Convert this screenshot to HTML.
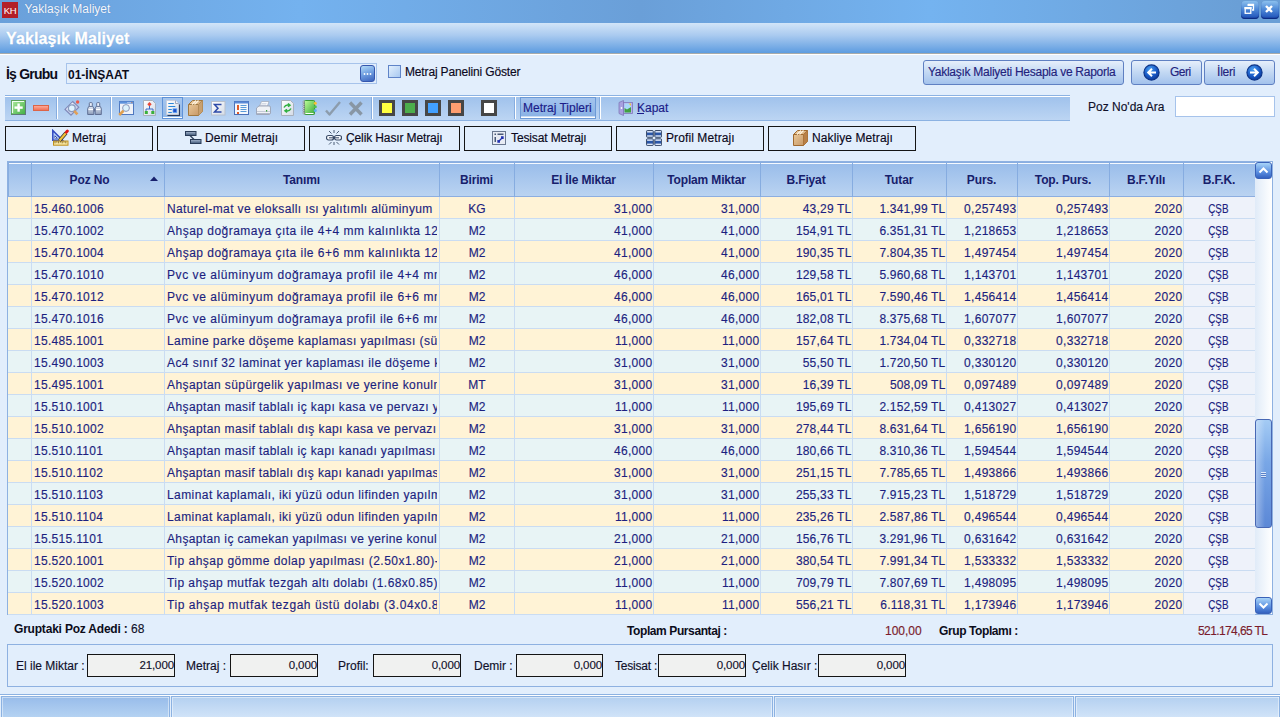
<!DOCTYPE html><html><head><meta charset="utf-8"><style>
*{margin:0;padding:0;box-sizing:border-box}
html,body{width:1280px;height:717px;overflow:hidden}
body{-webkit-text-stroke:0.15px currentColor;position:relative;background:#e2eefc;font-family:"Liberation Sans",sans-serif;font-size:12px;color:#15153a}
.a{position:absolute}
.t{position:absolute;white-space:nowrap;line-height:14px}
#title{left:0;top:0;width:1280px;height:23px;background:linear-gradient(90deg,#6aa0da 0px,#74b2ef 300px,#6a9fd8 640px,#74b3f0 930px,#6a9fd6 1240px)}
#hdr{left:0;top:23px;width:1280px;height:30px;background:linear-gradient(#d2e5f8,#abcbf0 40%,#5d9ce0 100%)}
.tb{left:5px;top:95px;width:1065px;height:26px;border-top:1px solid #8cb2e2;border-bottom:1px solid #8cb2e2;background:linear-gradient(#ffffff 0,#ffffff 1px,#a0c2ec 1px,#bcd5f3 100%)}
.sep{width:2px;height:22px;top:97px;background:linear-gradient(90deg,#86ade0 0,#86ade0 1px,#fff 1px)}
.mb{top:126px;height:25px;width:148px;border:1px solid #151515}
.mbt{color:#0a0820}
.btn{top:60px;height:25px;border:1px solid #5f80c2;border-radius:3px;background:linear-gradient(#e6effb,#c2d8f3 50%,#a3c2ec);color:#23237d}
.gh{top:162px;height:35px;background:linear-gradient(#98bcea,#bad3f1);border-bottom:1px solid #8daee0}
.ght{font-weight:bold;-webkit-text-stroke:0;color:#17206c;top:173px;text-align:center;letter-spacing:-0.15px}
.cell{height:21px;overflow:hidden;white-space:nowrap;color:#1c1f80;padding-top:5px;line-height:14px}
.r{text-align:right;padding-right:0.5px}
.c{text-align:center}
.l{padding-left:2px}
.inp{top:654px;height:23px;border:1px solid #141414;background:#f0f1f0;text-align:right;padding-right:0px;padding-top:3.5px;line-height:13px;color:#10102a;font-size:11.5px;letter-spacing:-0.1px}
.sb{top:696px;height:21px;background:linear-gradient(#b4d0f0,#d0e3f8);border:1px solid #8cb2e2;border-bottom:0;box-shadow:inset 1px 1px 0 rgba(255,255,255,0.45),inset -1px 0 0 rgba(255,255,255,0.45)}
</style></head><body>
<div id="title" class="a"></div>
<div class="a" style="left:2px;top:2px;width:16px;height:16px;background:#b31f27;color:#fff;font-size:9.5px;-webkit-text-stroke:0;line-height:17px;text-align:center;letter-spacing:-0.4px">KH</div>
<div class="t" style="left:24.5px;top:2px;color:#f4f8ff;font-size:12px;-webkit-text-stroke:0;text-shadow:0 0 1px #4a78b0">Yaklaşık Maliyet</div>
<div class="a" style="left:1241px;top:1px;width:18px;height:18px;border-radius:4px;background:linear-gradient(#8cc0ee,#4f8ad8 45%,#2a5fc0 85%,#173a9a);box-shadow:inset 0 -1px 1px #0c2a80"><svg width="18" height="18" style="position:absolute;left:-1px;top:-1px"><path d="M8 4.5h5.5v5.5h-1.5" fill="none" stroke="#fff" stroke-width="1.3"/><rect x="7.5" y="4" width="6" height="2" fill="#fff"/><rect x="5.2" y="7.7" width="5.6" height="5.6" fill="none" stroke="#fff" stroke-width="1.3"/><rect x="4.5" y="7" width="7" height="2.2" fill="#fff"/></svg></div>
<div class="a" style="left:1261px;top:1px;width:18px;height:18px;border-radius:4px;background:linear-gradient(#8cc0ee,#4f8ad8 45%,#2a5fc0 85%,#173a9a);box-shadow:inset 0 -1px 1px #0c2a80"><svg width="18" height="18" style="position:absolute;left:-1px;top:-1px"><path d="M6 6l6 6M12 6l-6 6" stroke="#fff" stroke-width="2.4"/></svg></div>
<div id="hdr" class="a"></div>
<div class="a" style="left:0;top:53px;width:1280px;height:1px;background:#a7aaa9"></div>
<div class="a" style="left:0;top:54px;width:1280px;height:1px;background:#ffffff"></div>
<div class="t" style="left:6px;top:30px;color:#fff;font-weight:bold;-webkit-text-stroke:0.3px #fff;letter-spacing:0.1px;font-size:16px;line-height:18px;text-shadow:0 0 1px #6a9ad0">Yaklaşık Maliyet</div>
<div class="t" style="left:6px;top:66px;font-weight:bold;-webkit-text-stroke:0;font-size:14px;line-height:16px;letter-spacing:-0.8px;color:#0c0c1a">İş Grubu</div>
<div class="a" style="left:66px;top:63px;width:311px;height:21px;border:1px solid #a6c3eb"></div>
<div class="t" style="left:68px;top:68px;font-weight:bold;-webkit-text-stroke:0;font-size:12px;color:#0c0c1a">01-İNŞAAT</div>
<div class="a" style="left:360px;top:65px;width:15px;height:17px;border-radius:3px;border:1px solid #3556ad;background:linear-gradient(160deg,#b4dcf8,#6f9ee0 50%,#3a62bd)"><svg width="13" height="15" style="position:absolute;left:0;top:0"><circle cx="3.5" cy="8" r="0.9" fill="#fff"/><circle cx="6.5" cy="8" r="0.9" fill="#fff"/><circle cx="9.5" cy="8" r="0.9" fill="#fff"/></svg></div>
<div class="a" style="left:388px;top:65px;width:13px;height:13px;border:1px solid #5f84c8;background:linear-gradient(135deg,#e2f0fd,#a9c9f0)"></div>
<div class="t" style="left:405px;top:65px;color:#0c0820;letter-spacing:-0.15px">Metraj Panelini Göster</div>
<div class="a btn" style="left:923px;width:201px"></div>
<div class="t" style="left:928px;top:65px;color:#23237d;letter-spacing:-0.27px">Yaklaşık Maliyeti Hesapla ve Raporla</div>
<div class="a btn" style="left:1131px;width:71px"></div>
<div class="a btn" style="left:1204px;width:71px"></div>
<div class="a" style="left:1142.5px;top:63.5px;width:17px;height:17px"><svg width="17" height="17" viewBox="0 0 17 17"><defs><radialGradient id="ag" cx="40%" cy="30%" r="70%"><stop offset="0" stop-color="#4aa0f0"/><stop offset="0.6" stop-color="#1a5cc8"/><stop offset="1" stop-color="#0d3a9a"/></radialGradient></defs><circle cx="8.5" cy="8.5" r="7.6" fill="url(#ag)" stroke="#0a3286" stroke-width="1.1"/><path d="M13 8.5H5.5M9 4.8L5.2 8.5 9 12.2" fill="none" stroke="#fff" stroke-width="2"/></svg></div>
<div class="t" style="left:1170px;top:65px;color:#23237d;letter-spacing:-0.5px">Geri</div>
<div class="t" style="left:1217px;top:65px;color:#23237d;letter-spacing:-0.2px">İleri</div>
<div class="a" style="left:1245.5px;top:63.5px;width:17px;height:17px"><svg width="17" height="17" viewBox="0 0 17 17"><circle cx="8.5" cy="8.5" r="7.6" fill="url(#ag)" stroke="#0a3286" stroke-width="1.1"/><path d="M4 8.5H11.5M8 4.8L11.8 8.5 8 12.2" fill="none" stroke="#fff" stroke-width="2"/></svg></div>
<div class="a tb"></div>
<div class="a sep" style="left:56px"></div>
<div class="a sep" style="left:110px"></div>
<div class="a sep" style="left:371px"></div>
<div class="a sep" style="left:514px"></div>
<div class="a sep" style="left:599px"></div>
<svg width="0" height="0" style="position:absolute"><defs>
<linearGradient id="gGreen" x1="0" y1="0" x2="1" y2="1"><stop offset="0" stop-color="#b0eaa0"/><stop offset="1" stop-color="#3fae42"/></linearGradient>
<linearGradient id="gRed" x1="0" y1="0" x2="0" y2="1"><stop offset="0" stop-color="#ffb0a0"/><stop offset="1" stop-color="#f06a50"/></linearGradient>
<linearGradient id="gDoc" x1="0" y1="0" x2="1" y2="1"><stop offset="0" stop-color="#ffffff"/><stop offset="1" stop-color="#d4dbe6"/></linearGradient>
<linearGradient id="gBox" x1="0" y1="0" x2="1" y2="1"><stop offset="0" stop-color="#f0d0a0"/><stop offset="1" stop-color="#c09060"/></linearGradient>
<linearGradient id="gBook" x1="0" y1="0" x2="1" y2="1"><stop offset="0" stop-color="#c0ff9a"/><stop offset="1" stop-color="#3aa83a"/></linearGradient>
<linearGradient id="gSteel" x1="0" y1="0" x2="0" y2="1"><stop offset="0" stop-color="#e8eef8"/><stop offset="1" stop-color="#8a9ab8"/></linearGradient>
<linearGradient id="gBar" x1="0" y1="0" x2="0" y2="1"><stop offset="0" stop-color="#a8b8d0"/><stop offset="1" stop-color="#405878"/></linearGradient>
</defs></svg>
<svg class="a" style="left:11px;top:100px" width="15" height="15" viewBox="0 0 15 15"><rect x="0.5" y="0.5" width="14" height="14" fill="url(#gGreen)" stroke="#58a058" stroke-width="1"/><path d="M1.5 13V1.5H13" fill="none" stroke="#f0fff0" stroke-width="1.2"/><path d="M14.5 1v13.5H1" fill="none" stroke="#607080" stroke-width="0.8"/><rect x="6.4" y="3.5" width="2.4" height="8.2" fill="#fff"/><rect x="3.5" y="6.4" width="8.2" height="2.4" fill="#fff"/></svg>
<svg class="a" style="left:33px;top:105px" width="16" height="6" viewBox="0 0 16 6"><rect x="0.5" y="0.5" width="15" height="5" fill="url(#gRed)" stroke="#dc6448"/></svg>
<svg class="a" style="left:64px;top:100px" width="16" height="16" viewBox="0 0 16 16"><path d="M1 9.5L8.8 1.5 14.8 7.2 7 15.2z" fill="#c9d0ec" stroke="#7f88b8" stroke-width="1.1"/><path d="M2.6 9.4L8.8 3" stroke="#eef0fc" stroke-width="1.2"/><circle cx="13.6" cy="2" r="1.7" fill="#f05848"/><circle cx="7.8" cy="8.2" r="3.4" fill="#dff2ff" stroke="#8a9cc0" stroke-width="1.3"/><path d="M10.2 10.8l3.2 3.6" stroke="#e0a058" stroke-width="2.6"/></svg>
<svg class="a" style="left:87px;top:102px" width="15" height="13" viewBox="0 0 15 13"><path d="M0.7 12.5V6.5L1.8 4.3H5.8L6.8 6.5V12.5z" fill="url(#gSteel)" stroke="#5f6f94" stroke-width="1"/><path d="M8.2 12.5V6.5L9.2 4.3H13.2L14.3 6.5V12.5z" fill="url(#gSteel)" stroke="#5f6f94" stroke-width="1"/><rect x="2.3" y="0.6" width="3" height="3.8" rx="0.8" fill="#e8eef8" stroke="#5f6f94" stroke-width="1"/><rect x="9.7" y="0.6" width="3" height="3.8" rx="0.8" fill="#e8eef8" stroke="#5f6f94" stroke-width="1"/><rect x="6.8" y="6.5" width="1.4" height="3" fill="#5f6f94"/><path d="M1.5 7.5h4.5M9 7.5h4.5" stroke="#ffffff" stroke-width="1.2"/></svg>
<svg class="a" style="left:118px;top:100px" width="16" height="16" viewBox="0 0 16 16"><rect x="1.5" y="1.5" width="14" height="13" fill="#f0f2f8" stroke="#4f78c0" stroke-width="1"/><rect x="1.5" y="1.5" width="14" height="2.2" fill="#5c92dc"/><rect x="9.5" y="2.2" width="1" height="0.9" fill="#fff"/><rect x="11.5" y="2.2" width="1" height="0.9" fill="#fff"/><rect x="13.3" y="2.2" width="1" height="0.9" fill="#f08040"/><circle cx="8" cy="8" r="3.4" fill="#dcf2fc" stroke="#8c98b8" stroke-width="1"/><path d="M5.5 10.8L1.2 15" stroke="#e0a050" stroke-width="2.6"/></svg>
<svg class="a" style="left:143px;top:100px" width="13" height="16" viewBox="0 0 13 16"><path d="M0.5 0.5H9.5L12.5 3.5V15.5H0.5z" fill="url(#gDoc)" stroke="#a8b0bc"/><path d="M6.5 2l2.2 2.2-2.2 2.2-2.2-2.2z" fill="#e84a3a"/><path d="M6.5 6v3M3 12V9h7v3" fill="none" stroke="#3a6ac8" stroke-width="1"/><rect x="1.8" y="11" width="3" height="3" fill="#3ab03a"/><rect x="8.3" y="11" width="3" height="3" fill="#3ab03a"/></svg>
<div class="a" style="left:162px;top:97px;width:21px;height:22px;border:1px solid #5f92d8;background:linear-gradient(#a6c6ee,#8fb6e6);box-shadow:inset 0 -1px 0 #fff"></div>
<svg class="a" style="left:166px;top:100px" width="14" height="16" viewBox="0 0 14 16"><path d="M13.5 4.5V15.5H1.5" fill="none" stroke="#2a3a5c" stroke-width="1.6"/><path d="M0.5 15V0.5H9.5L12.5 3.5V14.5H0.5z" fill="url(#gDoc)" stroke="#c8ccd8" stroke-width="0.8"/><path d="M9.5 0.5V3.5H12.5" fill="#f0f2f8" stroke="#8a96b0" stroke-width="0.8"/><path d="M2.3 3.5h5.5M2.3 6.5h7M2.3 9.5h3.5M2.3 12.5h3.5" stroke="#2a86d8" stroke-width="1.2"/><rect x="7" y="8.8" width="3.8" height="3.8" fill="#2050c8" stroke="#60a8ff" stroke-width="0.7"/></svg>
<svg class="a" style="left:188px;top:100px" width="15" height="16" viewBox="0 0 15 16"><path d="M0.5 4.5L4.5 0.5H14.5V11.5L10.5 15.5H0.5z" fill="url(#gBox)" stroke="#a07840"/><path d="M0.5 4.5H10.5V15.5M10.5 4.5L14.5 0.5" fill="none" stroke="#a07840"/><path d="M4 4.5L8 0.5M6.5 4.5L10.5 0.5" stroke="#fff4e0" stroke-width="1.2"/><path d="M10.5 4.5L14.5 0.5V11.5L10.5 15.5z" fill="#c8a070"/></svg>
<svg class="a" style="left:211px;top:101px" width="15" height="15" viewBox="0 0 15 15"><rect x="0.5" y="0.5" width="13.5" height="13.5" fill="url(#gDoc)" stroke="#b8c0cc"/><path d="M10.5 3.5H3.5L7 7.2 3.5 11H10.5" fill="none" stroke="#2d4aa8" stroke-width="1.5"/></svg>
<svg class="a" style="left:234px;top:101px" width="15" height="14" viewBox="0 0 15 14"><rect x="0.5" y="0.5" width="14" height="13" fill="#f6f8fc" stroke="#4a70b8"/><rect x="0.5" y="0.5" width="14" height="2" fill="#5a8ad8"/><path d="M4 4v5M4 11v2" stroke="#e05a28" stroke-width="2"/><path d="M6.5 4.5h6M6.5 6.5h6M6.5 8.5h6M6.5 10.5h6" stroke="#5a9ad8" stroke-width="1"/></svg>
<svg class="a" style="left:256px;top:101px" width="15" height="14" viewBox="0 0 15 14"><path d="M3.5 5L5.5 0.5H13L11.5 5z" fill="#f8f9fc" stroke="#a4acbc" stroke-width="0.8"/><path d="M5.5 2.5h5M5 4h5" stroke="#c0c8d8" stroke-width="0.6"/><path d="M0.5 7L3 5H14L14.5 7V12.5L13.5 13.5H0.5z" fill="#f0f2f6" stroke="#98a2b4" stroke-width="0.9"/><path d="M1 10.5H14" stroke="#c4cad6" stroke-width="1"/><path d="M1 12.5H14" stroke="#b0b8c8" stroke-width="1"/><rect x="10" y="9" width="1.2" height="1.6" fill="#40a040"/></svg>
<svg class="a" style="left:281px;top:100px" width="13" height="16" viewBox="0 0 13 16"><path d="M0.5 0.5H9.5L12.5 3.5V15.5H0.5z" fill="url(#gDoc)" stroke="#a8b0bc"/><path d="M3 7.5Q4.5 4.5 8 5.2M7 3.5l2 1.7-2 1.5M10 8.5Q8.5 11.5 5 10.8M6 12.5l-2-1.7 2-1.5" fill="none" stroke="#30b040" stroke-width="1.5"/></svg>
<svg class="a" style="left:302px;top:100px" width="15" height="15" viewBox="0 0 15 15"><rect x="2.5" y="0.5" width="10" height="14" rx="0.8" fill="url(#gBook)" stroke="#3a9a3a"/><path d="M3.5 13.5H11.5" stroke="#fff" stroke-width="1"/><g fill="#f4f4f4" stroke="#707078" stroke-width="0.6"><circle cx="1.8" cy="2" r="0.9"/><circle cx="1.8" cy="4.2" r="0.9"/><circle cx="1.8" cy="6.4" r="0.9"/><circle cx="1.8" cy="8.6" r="0.9"/><circle cx="1.8" cy="10.8" r="0.9"/><circle cx="1.8" cy="13" r="0.9"/></g><circle cx="13.3" cy="3.2" r="1.5" fill="#f8c030"/><circle cx="13.3" cy="6.8" r="1.5" fill="#50c050"/><circle cx="13.3" cy="10.4" r="1.5" fill="#60b0f0"/></svg>
<svg class="a" style="left:325px;top:101px" width="16" height="15" viewBox="0 0 16 15"><path d="M1 9.5L4.5 13.5 15 1" fill="none" stroke="#8c9cac" stroke-width="2.4" stroke-linejoin="round"/></svg>
<svg class="a" style="left:348px;top:101px" width="15" height="15" viewBox="0 0 15 15"><path d="M2 1.5L13.5 13.5M13.5 1.5L2 13.5" stroke="#8896a4" stroke-width="3.4"/></svg>
<div class="a" style="left:379px;top:100px;width:16px;height:16px;border:3px solid #464646;background:#ffff40"></div>
<div class="a" style="left:402px;top:100px;width:16px;height:16px;border:3px solid #464646;background:#4cae4c"></div>
<div class="a" style="left:425px;top:100px;width:16px;height:16px;border:3px solid #464646;background:#42a0ff"></div>
<div class="a" style="left:448px;top:100px;width:16px;height:16px;border:3px solid #464646;background:#ff9e70"></div>
<div class="a" style="left:481px;top:100px;width:16px;height:16px;border:3px solid #464646;background:#ffffff"></div>
<div class="a" style="left:520px;top:97px;width:76px;height:22px;border:1px solid #6d9ad6;background:linear-gradient(#a4c4ee,#88b0e4);box-shadow:inset 0 -1px 0 #fff,inset 0 -2px 0 #c8dcf4"></div>
<div class="t" style="left:523px;top:101px;color:#1c1c88">Metraj Tipleri</div>
<svg class="a" style="left:618px;top:100px" width="15" height="16" viewBox="0 0 15 16"><path d="M1 2.5L5.5 0.5V15.5L1 13.5z" fill="#a8a0e0" stroke="#8078b8" stroke-width="0.8"/><rect x="5.5" y="2.5" width="9" height="11" fill="#b8b0f0" stroke="#8078b8" stroke-width="0.8"/><rect x="6.5" y="3.5" width="6.5" height="9" fill="#a8d8f8"/><path d="M6.5 12.5V8L9 9.5 13 7V12.5z" fill="#40a040"/><path d="M10.5 3.5H13V6z" fill="#f0c040"/><path d="M2.5 8h2M3.5 7v2" stroke="#fff" stroke-width="0.8"/></svg>
<div class="t" style="left:637px;top:101px;color:#1c1c88">Kapat</div>
<div class="a" style="left:637px;top:113px;width:7px;height:1px;background:#1c1c88"></div>
<div class="t" style="left:1088px;top:100px;color:#10102a">Poz No'da Ara</div>
<div class="a" style="left:1175px;top:96px;width:100px;height:21px;border:1px solid #a6c3eb;background:#fff"></div>
<div class="a mb" style="left:5px;width:148px"></div>
<div class="t mbt" style="left:72px;top:131px;letter-spacing:0.1px">Metraj</div>
<div class="a mb" style="left:157px;width:148px"></div>
<div class="t mbt" style="left:205px;top:131px;letter-spacing:0.1px">Demir Metrajı</div>
<div class="a mb" style="left:309px;width:151px"></div>
<div class="t mbt" style="left:346px;top:131px;letter-spacing:-0.12px">Çelik Hasır Metrajı</div>
<div class="a mb" style="left:464px;width:148px"></div>
<div class="t mbt" style="left:511px;top:131px;letter-spacing:-0.12px">Tesisat Metrajı</div>
<div class="a mb" style="left:616px;width:148px"></div>
<div class="t mbt" style="left:666px;top:131px;letter-spacing:0.1px">Profil Metrajı</div>
<div class="a mb" style="left:768px;width:148px"></div>
<div class="t mbt" style="left:812px;top:131px;letter-spacing:0.1px">Nakliye Metrajı</div>
<svg class="a" style="left:52px;top:129px" width="17" height="17" viewBox="0 0 17 17"><path d="M0.8 1.5V11.2H10.5z" fill="#b4d0fa" stroke="#3048c0" stroke-width="1.5" stroke-linejoin="miter"/><path d="M2.6 6.2V9.6H6z" fill="#1c2a88"/><circle cx="3.6" cy="8.6" r="0.6" fill="#fff"/><rect x="1.5" y="12" width="14.5" height="4.2" fill="#f6e4a0" stroke="#c0901c" stroke-width="1"/><path d="M3 12.3v2M4.8 12.3v1.3M6.6 12.3v2M8.4 12.3v1.3M10.2 12.3v2M12 12.3v1.3M13.8 12.3v2" stroke="#7a5a10" stroke-width="0.8"/><path d="M7.5 11.5L14 4" stroke="#303030" stroke-width="3.6"/><path d="M7.5 11.5L14 4" stroke="#f2c23a" stroke-width="2.2"/><path d="M14.3 3.2L15.4 2" stroke="#e01818" stroke-width="2.8" stroke-linecap="round"/></svg>
<svg class="a" style="left:185px;top:131px" width="17" height="14" viewBox="0 0 17 14"><rect x="0.5" y="0.5" width="10.5" height="4" fill="url(#gBar)" stroke="#2a3c58"/><rect x="5.5" y="8.5" width="10.5" height="4" fill="url(#gBar)" stroke="#2a3c58"/><path d="M5 4.5L9 8.5" stroke="#2a3c58" stroke-width="1.2"/></svg>
<svg class="a" style="left:326px;top:130px" width="16" height="15" viewBox="0 0 16 15"><rect x="0.5" y="5.5" width="7" height="4.5" rx="2" fill="#f4f6fa" stroke="#3a4c68" stroke-width="1.2"/><rect x="8.5" y="5.5" width="7" height="4.5" rx="2" fill="#f4f6fa" stroke="#3a4c68" stroke-width="1.2"/><path d="M3 7.8h10" stroke="#3a4c68" stroke-width="1"/><path d="M3 1l2.5 2.5M13 1l-2.5 2.5M8 0v3M3 14.5l2.5-2.5M13 14.5l-2.5-2.5M8 15v-3" stroke="#3a4c68" stroke-width="0.9"/></svg>
<svg class="a" style="left:492px;top:131px" width="14" height="14" viewBox="0 0 14 14"><rect x="0.5" y="0.5" width="13" height="13" fill="#e8ecf4" stroke="#6a7890"/><rect x="2.5" y="2.5" width="1.5" height="1.5" fill="#4a5a78"/><rect x="5.5" y="2.5" width="6" height="1.5" fill="#4a5a78"/><rect x="2.5" y="6" width="1.5" height="5" fill="#4a5a78"/><path d="M6 11l5-5M9 6h2v2M6 9v2h2" fill="none" stroke="#2030b0" stroke-width="1.3"/></svg>
<svg class="a" style="left:646px;top:130px" width="16" height="16" viewBox="0 0 16 16"><rect x="0.5" y="0.5" width="6.8" height="6.8" rx="1" fill="#2a56a8" stroke="#40506c" stroke-width="1"/><rect x="1.1" y="1.1" width="5.6" height="1.4" fill="#e8eef8"/><rect x="1.1" y="5.3" width="5.6" height="1.4" fill="#dfe6f2"/><rect x="8.8" y="0.5" width="6.8" height="6.8" rx="1" fill="#2a56a8" stroke="#40506c" stroke-width="1"/><rect x="9.4" y="1.1" width="5.6" height="1.4" fill="#e8eef8"/><rect x="9.4" y="5.3" width="5.6" height="1.4" fill="#dfe6f2"/><rect x="0.5" y="8.8" width="6.8" height="6.8" rx="1" fill="#2a56a8" stroke="#40506c" stroke-width="1"/><rect x="1.1" y="9.4" width="5.6" height="1.4" fill="#e8eef8"/><rect x="1.1" y="13.600000000000001" width="5.6" height="1.4" fill="#dfe6f2"/><rect x="8.8" y="8.8" width="6.8" height="6.8" rx="1" fill="#2a56a8" stroke="#40506c" stroke-width="1"/><rect x="9.4" y="9.4" width="5.6" height="1.4" fill="#e8eef8"/><rect x="9.4" y="13.600000000000001" width="5.6" height="1.4" fill="#dfe6f2"/></svg>
<svg class="a" style="left:793px;top:130px" width="15" height="16" viewBox="0 0 15 16"><path d="M0.5 4.5L4.5 0.5H14.5V11.5L10.5 15.5H0.5z" fill="url(#gBox)" stroke="#a06a30"/><path d="M0.5 4.5H10.5V15.5M10.5 4.5L14.5 0.5" fill="none" stroke="#a06a30"/><path d="M4 4.5L8 0.5M6.5 4.5L10.5 0.5" stroke="#fff4e0" stroke-width="1.2"/><path d="M10.5 4.5L14.5 0.5V11.5L10.5 15.5z" fill="#b88048"/></svg>
<div class="a" style="left:7px;top:161px;width:1266px;height:454px;border:1px solid #8eb1e1;background:#e3effb"></div>
<div class="a gh" style="left:8px;width:1247px"></div>
<div class="a" style="left:8px;top:162px;width:1247px;height:1px;background:#88ade0"></div>
<div class="a" style="left:8px;top:162px;width:1px;height:34px;background:#88ade0"></div>
<div class="a" style="left:9px;top:163px;width:1246px;height:1px;background:#f4f9ff"></div>
<div class="a" style="left:31px;top:163px;width:1px;height:34px;background:#86ace0"></div>
<div class="a" style="left:164px;top:163px;width:1px;height:34px;background:#86ace0"></div>
<div class="a" style="left:439px;top:163px;width:1px;height:34px;background:#86ace0"></div>
<div class="a" style="left:514px;top:163px;width:1px;height:34px;background:#86ace0"></div>
<div class="a" style="left:653px;top:163px;width:1px;height:34px;background:#86ace0"></div>
<div class="a" style="left:760px;top:163px;width:1px;height:34px;background:#86ace0"></div>
<div class="a" style="left:852px;top:163px;width:1px;height:34px;background:#86ace0"></div>
<div class="a" style="left:946px;top:163px;width:1px;height:34px;background:#86ace0"></div>
<div class="a" style="left:1017px;top:163px;width:1px;height:34px;background:#86ace0"></div>
<div class="a" style="left:1109px;top:163px;width:1px;height:34px;background:#86ace0"></div>
<div class="a" style="left:1183px;top:163px;width:1px;height:34px;background:#86ace0"></div>
<div class="t ght" style="left:31px;width:117px">Poz No</div>
<div class="t ght" style="left:164px;width:275px">Tanımı</div>
<div class="t ght" style="left:439px;width:75px">Birimi</div>
<div class="t ght" style="left:514px;width:139px">El İle Miktar</div>
<div class="t ght" style="left:653px;width:107px">Toplam Miktar</div>
<div class="t ght" style="left:760px;width:92px">B.Fiyat</div>
<div class="t ght" style="left:852px;width:94px">Tutar</div>
<div class="t ght" style="left:946px;width:71px">Purs.</div>
<div class="t ght" style="left:1017px;width:92px">Top. Purs.</div>
<div class="t ght" style="left:1109px;width:74px">B.F.Yılı</div>
<div class="t ght" style="left:1183px;width:72px">B.F.K.</div>
<svg class="a" style="left:150px;top:176px" width="8" height="5" viewBox="0 0 8 5"><path d="M0 5L4 0.5 8 5z" fill="#17206c"/></svg>
<div class="a" style="left:8px;top:197px;width:1175px;height:22px;background:#fff3d6"></div>
<div class="a" style="left:1183px;top:197px;width:72px;height:22px;background:#eef2fa"></div>
<div class="a" style="left:8px;top:218px;width:1247px;height:1px;background:#cadcf2"></div>
<div class="a cell l" style="left:32px;top:197px;width:132px;letter-spacing:0.3px;">15.460.1006</div>
<div class="a cell l" style="left:165px;top:197px;width:272px;letter-spacing:0.381px;">Naturel-mat ve eloksallı ısı yalıtımlı alüminyum</div>
<div class="a cell c" style="left:440px;top:197px;width:74px;">KG</div>
<div class="a cell r" style="left:515px;top:197px;width:138px;letter-spacing:0.3px;">31,000</div>
<div class="a cell r" style="left:654px;top:197px;width:106px;letter-spacing:0.3px;">31,000</div>
<div class="a cell r" style="left:761px;top:197px;width:91px;letter-spacing:0.2px;">43,29 TL</div>
<div class="a cell r" style="left:853px;top:197px;width:93px;letter-spacing:0.2px;">1.341,99 TL</div>
<div class="a cell r" style="left:947px;top:197px;width:70px;letter-spacing:0.3px;">0,257493</div>
<div class="a cell r" style="left:1018px;top:197px;width:91px;letter-spacing:0.3px;">0,257493</div>
<div class="a cell r" style="left:1110px;top:197px;width:73px;letter-spacing:0.3px;">2020</div>
<div class="a cell c" style="left:1184px;top:197px;width:71px;"><span style="display:inline-block;transform:scaleX(0.82);margin-left:-2px">ÇŞB</span></div>
<div class="a" style="left:8px;top:219px;width:1175px;height:22px;background:#e8f4f5"></div>
<div class="a" style="left:1183px;top:219px;width:72px;height:22px;background:#eef2fa"></div>
<div class="a" style="left:8px;top:240px;width:1247px;height:1px;background:#cadcf2"></div>
<div class="a cell l" style="left:32px;top:219px;width:132px;letter-spacing:0.3px;">15.470.1002</div>
<div class="a cell l" style="left:165px;top:219px;width:272px;letter-spacing:0.483px;">Ahşap doğramaya çıta ile 4+4 mm kalınlıkta 12 mm</div>
<div class="a cell c" style="left:440px;top:219px;width:74px;">M2</div>
<div class="a cell r" style="left:515px;top:219px;width:138px;letter-spacing:0.3px;">41,000</div>
<div class="a cell r" style="left:654px;top:219px;width:106px;letter-spacing:0.3px;">41,000</div>
<div class="a cell r" style="left:761px;top:219px;width:91px;letter-spacing:0.2px;">154,91 TL</div>
<div class="a cell r" style="left:853px;top:219px;width:93px;letter-spacing:0.2px;">6.351,31 TL</div>
<div class="a cell r" style="left:947px;top:219px;width:70px;letter-spacing:0.3px;">1,218653</div>
<div class="a cell r" style="left:1018px;top:219px;width:91px;letter-spacing:0.3px;">1,218653</div>
<div class="a cell r" style="left:1110px;top:219px;width:73px;letter-spacing:0.3px;">2020</div>
<div class="a cell c" style="left:1184px;top:219px;width:71px;"><span style="display:inline-block;transform:scaleX(0.82);margin-left:-2px">ÇŞB</span></div>
<div class="a" style="left:8px;top:241px;width:1175px;height:22px;background:#fff3d6"></div>
<div class="a" style="left:1183px;top:241px;width:72px;height:22px;background:#eef2fa"></div>
<div class="a" style="left:8px;top:262px;width:1247px;height:1px;background:#cadcf2"></div>
<div class="a cell l" style="left:32px;top:241px;width:132px;letter-spacing:0.3px;">15.470.1004</div>
<div class="a cell l" style="left:165px;top:241px;width:272px;letter-spacing:0.483px;">Ahşap doğramaya çıta ile 6+6 mm kalınlıkta 12 mm</div>
<div class="a cell c" style="left:440px;top:241px;width:74px;">M2</div>
<div class="a cell r" style="left:515px;top:241px;width:138px;letter-spacing:0.3px;">41,000</div>
<div class="a cell r" style="left:654px;top:241px;width:106px;letter-spacing:0.3px;">41,000</div>
<div class="a cell r" style="left:761px;top:241px;width:91px;letter-spacing:0.2px;">190,35 TL</div>
<div class="a cell r" style="left:853px;top:241px;width:93px;letter-spacing:0.2px;">7.804,35 TL</div>
<div class="a cell r" style="left:947px;top:241px;width:70px;letter-spacing:0.3px;">1,497454</div>
<div class="a cell r" style="left:1018px;top:241px;width:91px;letter-spacing:0.3px;">1,497454</div>
<div class="a cell r" style="left:1110px;top:241px;width:73px;letter-spacing:0.3px;">2020</div>
<div class="a cell c" style="left:1184px;top:241px;width:71px;"><span style="display:inline-block;transform:scaleX(0.82);margin-left:-2px">ÇŞB</span></div>
<div class="a" style="left:8px;top:263px;width:1175px;height:22px;background:#e8f4f5"></div>
<div class="a" style="left:1183px;top:263px;width:72px;height:22px;background:#eef2fa"></div>
<div class="a" style="left:8px;top:284px;width:1247px;height:1px;background:#cadcf2"></div>
<div class="a cell l" style="left:32px;top:263px;width:132px;letter-spacing:0.3px;">15.470.1010</div>
<div class="a cell l" style="left:165px;top:263px;width:272px;letter-spacing:0.571px;">Pvc ve alüminyum doğramaya profil ile 4+4 mm</div>
<div class="a cell c" style="left:440px;top:263px;width:74px;">M2</div>
<div class="a cell r" style="left:515px;top:263px;width:138px;letter-spacing:0.3px;">46,000</div>
<div class="a cell r" style="left:654px;top:263px;width:106px;letter-spacing:0.3px;">46,000</div>
<div class="a cell r" style="left:761px;top:263px;width:91px;letter-spacing:0.2px;">129,58 TL</div>
<div class="a cell r" style="left:853px;top:263px;width:93px;letter-spacing:0.2px;">5.960,68 TL</div>
<div class="a cell r" style="left:947px;top:263px;width:70px;letter-spacing:0.3px;">1,143701</div>
<div class="a cell r" style="left:1018px;top:263px;width:91px;letter-spacing:0.3px;">1,143701</div>
<div class="a cell r" style="left:1110px;top:263px;width:73px;letter-spacing:0.3px;">2020</div>
<div class="a cell c" style="left:1184px;top:263px;width:71px;"><span style="display:inline-block;transform:scaleX(0.82);margin-left:-2px">ÇŞB</span></div>
<div class="a" style="left:8px;top:285px;width:1175px;height:22px;background:#fff3d6"></div>
<div class="a" style="left:1183px;top:285px;width:72px;height:22px;background:#eef2fa"></div>
<div class="a" style="left:8px;top:306px;width:1247px;height:1px;background:#cadcf2"></div>
<div class="a cell l" style="left:32px;top:285px;width:132px;letter-spacing:0.3px;">15.470.1012</div>
<div class="a cell l" style="left:165px;top:285px;width:272px;letter-spacing:0.573px;">Pvc ve alüminyum doğramaya profil ile 6+6 mm</div>
<div class="a cell c" style="left:440px;top:285px;width:74px;">M2</div>
<div class="a cell r" style="left:515px;top:285px;width:138px;letter-spacing:0.3px;">46,000</div>
<div class="a cell r" style="left:654px;top:285px;width:106px;letter-spacing:0.3px;">46,000</div>
<div class="a cell r" style="left:761px;top:285px;width:91px;letter-spacing:0.2px;">165,01 TL</div>
<div class="a cell r" style="left:853px;top:285px;width:93px;letter-spacing:0.2px;">7.590,46 TL</div>
<div class="a cell r" style="left:947px;top:285px;width:70px;letter-spacing:0.3px;">1,456414</div>
<div class="a cell r" style="left:1018px;top:285px;width:91px;letter-spacing:0.3px;">1,456414</div>
<div class="a cell r" style="left:1110px;top:285px;width:73px;letter-spacing:0.3px;">2020</div>
<div class="a cell c" style="left:1184px;top:285px;width:71px;"><span style="display:inline-block;transform:scaleX(0.82);margin-left:-2px">ÇŞB</span></div>
<div class="a" style="left:8px;top:307px;width:1175px;height:22px;background:#e8f4f5"></div>
<div class="a" style="left:1183px;top:307px;width:72px;height:22px;background:#eef2fa"></div>
<div class="a" style="left:8px;top:328px;width:1247px;height:1px;background:#cadcf2"></div>
<div class="a cell l" style="left:32px;top:307px;width:132px;letter-spacing:0.3px;">15.470.1016</div>
<div class="a cell l" style="left:165px;top:307px;width:272px;letter-spacing:0.573px;">Pvc ve alüminyum doğramaya profil ile 6+6 mm</div>
<div class="a cell c" style="left:440px;top:307px;width:74px;">M2</div>
<div class="a cell r" style="left:515px;top:307px;width:138px;letter-spacing:0.3px;">46,000</div>
<div class="a cell r" style="left:654px;top:307px;width:106px;letter-spacing:0.3px;">46,000</div>
<div class="a cell r" style="left:761px;top:307px;width:91px;letter-spacing:0.2px;">182,08 TL</div>
<div class="a cell r" style="left:853px;top:307px;width:93px;letter-spacing:0.2px;">8.375,68 TL</div>
<div class="a cell r" style="left:947px;top:307px;width:70px;letter-spacing:0.3px;">1,607077</div>
<div class="a cell r" style="left:1018px;top:307px;width:91px;letter-spacing:0.3px;">1,607077</div>
<div class="a cell r" style="left:1110px;top:307px;width:73px;letter-spacing:0.3px;">2020</div>
<div class="a cell c" style="left:1184px;top:307px;width:71px;"><span style="display:inline-block;transform:scaleX(0.82);margin-left:-2px">ÇŞB</span></div>
<div class="a" style="left:8px;top:329px;width:1175px;height:22px;background:#fff3d6"></div>
<div class="a" style="left:1183px;top:329px;width:72px;height:22px;background:#eef2fa"></div>
<div class="a" style="left:8px;top:350px;width:1247px;height:1px;background:#cadcf2"></div>
<div class="a cell l" style="left:32px;top:329px;width:132px;letter-spacing:0.3px;">15.485.1001</div>
<div class="a cell l" style="left:165px;top:329px;width:272px;letter-spacing:0.445px;">Lamine parke döşeme kaplaması yapılması (süngerli)</div>
<div class="a cell c" style="left:440px;top:329px;width:74px;">M2</div>
<div class="a cell r" style="left:515px;top:329px;width:138px;letter-spacing:0.3px;">11,000</div>
<div class="a cell r" style="left:654px;top:329px;width:106px;letter-spacing:0.3px;">11,000</div>
<div class="a cell r" style="left:761px;top:329px;width:91px;letter-spacing:0.2px;">157,64 TL</div>
<div class="a cell r" style="left:853px;top:329px;width:93px;letter-spacing:0.2px;">1.734,04 TL</div>
<div class="a cell r" style="left:947px;top:329px;width:70px;letter-spacing:0.3px;">0,332718</div>
<div class="a cell r" style="left:1018px;top:329px;width:91px;letter-spacing:0.3px;">0,332718</div>
<div class="a cell r" style="left:1110px;top:329px;width:73px;letter-spacing:0.3px;">2020</div>
<div class="a cell c" style="left:1184px;top:329px;width:71px;"><span style="display:inline-block;transform:scaleX(0.82);margin-left:-2px">ÇŞB</span></div>
<div class="a" style="left:8px;top:351px;width:1175px;height:22px;background:#e8f4f5"></div>
<div class="a" style="left:1183px;top:351px;width:72px;height:22px;background:#eef2fa"></div>
<div class="a" style="left:8px;top:372px;width:1247px;height:1px;background:#cadcf2"></div>
<div class="a cell l" style="left:32px;top:351px;width:132px;letter-spacing:0.3px;">15.490.1003</div>
<div class="a cell l" style="left:165px;top:351px;width:272px;letter-spacing:0.414px;">Ac4 sınıf 32 laminat yer kaplaması ile döşeme kaplaması</div>
<div class="a cell c" style="left:440px;top:351px;width:74px;">M2</div>
<div class="a cell r" style="left:515px;top:351px;width:138px;letter-spacing:0.3px;">31,000</div>
<div class="a cell r" style="left:654px;top:351px;width:106px;letter-spacing:0.3px;">31,000</div>
<div class="a cell r" style="left:761px;top:351px;width:91px;letter-spacing:0.2px;">55,50 TL</div>
<div class="a cell r" style="left:853px;top:351px;width:93px;letter-spacing:0.2px;">1.720,50 TL</div>
<div class="a cell r" style="left:947px;top:351px;width:70px;letter-spacing:0.3px;">0,330120</div>
<div class="a cell r" style="left:1018px;top:351px;width:91px;letter-spacing:0.3px;">0,330120</div>
<div class="a cell r" style="left:1110px;top:351px;width:73px;letter-spacing:0.3px;">2020</div>
<div class="a cell c" style="left:1184px;top:351px;width:71px;"><span style="display:inline-block;transform:scaleX(0.82);margin-left:-2px">ÇŞB</span></div>
<div class="a" style="left:8px;top:373px;width:1175px;height:22px;background:#fff3d6"></div>
<div class="a" style="left:1183px;top:373px;width:72px;height:22px;background:#eef2fa"></div>
<div class="a" style="left:8px;top:394px;width:1247px;height:1px;background:#cadcf2"></div>
<div class="a cell l" style="left:32px;top:373px;width:132px;letter-spacing:0.3px;">15.495.1001</div>
<div class="a cell l" style="left:165px;top:373px;width:272px;letter-spacing:0.422px;">Ahşaptan süpürgelik yapılması ve yerine konulması</div>
<div class="a cell c" style="left:440px;top:373px;width:74px;">MT</div>
<div class="a cell r" style="left:515px;top:373px;width:138px;letter-spacing:0.3px;">31,000</div>
<div class="a cell r" style="left:654px;top:373px;width:106px;letter-spacing:0.3px;">31,000</div>
<div class="a cell r" style="left:761px;top:373px;width:91px;letter-spacing:0.2px;">16,39 TL</div>
<div class="a cell r" style="left:853px;top:373px;width:93px;letter-spacing:0.2px;">508,09 TL</div>
<div class="a cell r" style="left:947px;top:373px;width:70px;letter-spacing:0.3px;">0,097489</div>
<div class="a cell r" style="left:1018px;top:373px;width:91px;letter-spacing:0.3px;">0,097489</div>
<div class="a cell r" style="left:1110px;top:373px;width:73px;letter-spacing:0.3px;">2020</div>
<div class="a cell c" style="left:1184px;top:373px;width:71px;"><span style="display:inline-block;transform:scaleX(0.82);margin-left:-2px">ÇŞB</span></div>
<div class="a" style="left:8px;top:395px;width:1175px;height:22px;background:#e8f4f5"></div>
<div class="a" style="left:1183px;top:395px;width:72px;height:22px;background:#eef2fa"></div>
<div class="a" style="left:8px;top:416px;width:1247px;height:1px;background:#cadcf2"></div>
<div class="a cell l" style="left:32px;top:395px;width:132px;letter-spacing:0.3px;">15.510.1001</div>
<div class="a cell l" style="left:165px;top:395px;width:272px;letter-spacing:0.401px;">Ahşaptan masif tablalı iç kapı kasa ve pervazı yapılması</div>
<div class="a cell c" style="left:440px;top:395px;width:74px;">M2</div>
<div class="a cell r" style="left:515px;top:395px;width:138px;letter-spacing:0.3px;">11,000</div>
<div class="a cell r" style="left:654px;top:395px;width:106px;letter-spacing:0.3px;">11,000</div>
<div class="a cell r" style="left:761px;top:395px;width:91px;letter-spacing:0.2px;">195,69 TL</div>
<div class="a cell r" style="left:853px;top:395px;width:93px;letter-spacing:0.2px;">2.152,59 TL</div>
<div class="a cell r" style="left:947px;top:395px;width:70px;letter-spacing:0.3px;">0,413027</div>
<div class="a cell r" style="left:1018px;top:395px;width:91px;letter-spacing:0.3px;">0,413027</div>
<div class="a cell r" style="left:1110px;top:395px;width:73px;letter-spacing:0.3px;">2020</div>
<div class="a cell c" style="left:1184px;top:395px;width:71px;"><span style="display:inline-block;transform:scaleX(0.82);margin-left:-2px">ÇŞB</span></div>
<div class="a" style="left:8px;top:417px;width:1175px;height:22px;background:#fff3d6"></div>
<div class="a" style="left:1183px;top:417px;width:72px;height:22px;background:#eef2fa"></div>
<div class="a" style="left:8px;top:438px;width:1247px;height:1px;background:#cadcf2"></div>
<div class="a cell l" style="left:32px;top:417px;width:132px;letter-spacing:0.3px;">15.510.1002</div>
<div class="a cell l" style="left:165px;top:417px;width:272px;letter-spacing:0.398px;">Ahşaptan masif tablalı dış kapı kasa ve pervazı yapılması</div>
<div class="a cell c" style="left:440px;top:417px;width:74px;">M2</div>
<div class="a cell r" style="left:515px;top:417px;width:138px;letter-spacing:0.3px;">31,000</div>
<div class="a cell r" style="left:654px;top:417px;width:106px;letter-spacing:0.3px;">31,000</div>
<div class="a cell r" style="left:761px;top:417px;width:91px;letter-spacing:0.2px;">278,44 TL</div>
<div class="a cell r" style="left:853px;top:417px;width:93px;letter-spacing:0.2px;">8.631,64 TL</div>
<div class="a cell r" style="left:947px;top:417px;width:70px;letter-spacing:0.3px;">1,656190</div>
<div class="a cell r" style="left:1018px;top:417px;width:91px;letter-spacing:0.3px;">1,656190</div>
<div class="a cell r" style="left:1110px;top:417px;width:73px;letter-spacing:0.3px;">2020</div>
<div class="a cell c" style="left:1184px;top:417px;width:71px;"><span style="display:inline-block;transform:scaleX(0.82);margin-left:-2px">ÇŞB</span></div>
<div class="a" style="left:8px;top:439px;width:1175px;height:22px;background:#e8f4f5"></div>
<div class="a" style="left:1183px;top:439px;width:72px;height:22px;background:#eef2fa"></div>
<div class="a" style="left:8px;top:460px;width:1247px;height:1px;background:#cadcf2"></div>
<div class="a cell l" style="left:32px;top:439px;width:132px;letter-spacing:0.3px;">15.510.1101</div>
<div class="a cell l" style="left:165px;top:439px;width:272px;letter-spacing:0.397px;">Ahşaptan masif tablalı iç kapı kanadı yapılması</div>
<div class="a cell c" style="left:440px;top:439px;width:74px;">M2</div>
<div class="a cell r" style="left:515px;top:439px;width:138px;letter-spacing:0.3px;">46,000</div>
<div class="a cell r" style="left:654px;top:439px;width:106px;letter-spacing:0.3px;">46,000</div>
<div class="a cell r" style="left:761px;top:439px;width:91px;letter-spacing:0.2px;">180,66 TL</div>
<div class="a cell r" style="left:853px;top:439px;width:93px;letter-spacing:0.2px;">8.310,36 TL</div>
<div class="a cell r" style="left:947px;top:439px;width:70px;letter-spacing:0.3px;">1,594544</div>
<div class="a cell r" style="left:1018px;top:439px;width:91px;letter-spacing:0.3px;">1,594544</div>
<div class="a cell r" style="left:1110px;top:439px;width:73px;letter-spacing:0.3px;">2020</div>
<div class="a cell c" style="left:1184px;top:439px;width:71px;"><span style="display:inline-block;transform:scaleX(0.82);margin-left:-2px">ÇŞB</span></div>
<div class="a" style="left:8px;top:461px;width:1175px;height:22px;background:#fff3d6"></div>
<div class="a" style="left:1183px;top:461px;width:72px;height:22px;background:#eef2fa"></div>
<div class="a" style="left:8px;top:482px;width:1247px;height:1px;background:#cadcf2"></div>
<div class="a cell l" style="left:32px;top:461px;width:132px;letter-spacing:0.3px;">15.510.1102</div>
<div class="a cell l" style="left:165px;top:461px;width:272px;letter-spacing:0.377px;">Ahşaptan masif tablalı dış kapı kanadı yapılması</div>
<div class="a cell c" style="left:440px;top:461px;width:74px;">M2</div>
<div class="a cell r" style="left:515px;top:461px;width:138px;letter-spacing:0.3px;">31,000</div>
<div class="a cell r" style="left:654px;top:461px;width:106px;letter-spacing:0.3px;">31,000</div>
<div class="a cell r" style="left:761px;top:461px;width:91px;letter-spacing:0.2px;">251,15 TL</div>
<div class="a cell r" style="left:853px;top:461px;width:93px;letter-spacing:0.2px;">7.785,65 TL</div>
<div class="a cell r" style="left:947px;top:461px;width:70px;letter-spacing:0.3px;">1,493866</div>
<div class="a cell r" style="left:1018px;top:461px;width:91px;letter-spacing:0.3px;">1,493866</div>
<div class="a cell r" style="left:1110px;top:461px;width:73px;letter-spacing:0.3px;">2020</div>
<div class="a cell c" style="left:1184px;top:461px;width:71px;"><span style="display:inline-block;transform:scaleX(0.82);margin-left:-2px">ÇŞB</span></div>
<div class="a" style="left:8px;top:483px;width:1175px;height:22px;background:#e8f4f5"></div>
<div class="a" style="left:1183px;top:483px;width:72px;height:22px;background:#eef2fa"></div>
<div class="a" style="left:8px;top:504px;width:1247px;height:1px;background:#cadcf2"></div>
<div class="a cell l" style="left:32px;top:483px;width:132px;letter-spacing:0.3px;">15.510.1103</div>
<div class="a cell l" style="left:165px;top:483px;width:272px;letter-spacing:0.42px;">Laminat kaplamalı, iki yüzü odun lifinden yapılmış</div>
<div class="a cell c" style="left:440px;top:483px;width:74px;">M2</div>
<div class="a cell r" style="left:515px;top:483px;width:138px;letter-spacing:0.3px;">31,000</div>
<div class="a cell r" style="left:654px;top:483px;width:106px;letter-spacing:0.3px;">31,000</div>
<div class="a cell r" style="left:761px;top:483px;width:91px;letter-spacing:0.2px;">255,33 TL</div>
<div class="a cell r" style="left:853px;top:483px;width:93px;letter-spacing:0.2px;">7.915,23 TL</div>
<div class="a cell r" style="left:947px;top:483px;width:70px;letter-spacing:0.3px;">1,518729</div>
<div class="a cell r" style="left:1018px;top:483px;width:91px;letter-spacing:0.3px;">1,518729</div>
<div class="a cell r" style="left:1110px;top:483px;width:73px;letter-spacing:0.3px;">2020</div>
<div class="a cell c" style="left:1184px;top:483px;width:71px;"><span style="display:inline-block;transform:scaleX(0.82);margin-left:-2px">ÇŞB</span></div>
<div class="a" style="left:8px;top:505px;width:1175px;height:22px;background:#fff3d6"></div>
<div class="a" style="left:1183px;top:505px;width:72px;height:22px;background:#eef2fa"></div>
<div class="a" style="left:8px;top:526px;width:1247px;height:1px;background:#cadcf2"></div>
<div class="a cell l" style="left:32px;top:505px;width:132px;letter-spacing:0.3px;">15.510.1104</div>
<div class="a cell l" style="left:165px;top:505px;width:272px;letter-spacing:0.42px;">Laminat kaplamalı, iki yüzü odun lifinden yapılmış</div>
<div class="a cell c" style="left:440px;top:505px;width:74px;">M2</div>
<div class="a cell r" style="left:515px;top:505px;width:138px;letter-spacing:0.3px;">11,000</div>
<div class="a cell r" style="left:654px;top:505px;width:106px;letter-spacing:0.3px;">11,000</div>
<div class="a cell r" style="left:761px;top:505px;width:91px;letter-spacing:0.2px;">235,26 TL</div>
<div class="a cell r" style="left:853px;top:505px;width:93px;letter-spacing:0.2px;">2.587,86 TL</div>
<div class="a cell r" style="left:947px;top:505px;width:70px;letter-spacing:0.3px;">0,496544</div>
<div class="a cell r" style="left:1018px;top:505px;width:91px;letter-spacing:0.3px;">0,496544</div>
<div class="a cell r" style="left:1110px;top:505px;width:73px;letter-spacing:0.3px;">2020</div>
<div class="a cell c" style="left:1184px;top:505px;width:71px;"><span style="display:inline-block;transform:scaleX(0.82);margin-left:-2px">ÇŞB</span></div>
<div class="a" style="left:8px;top:527px;width:1175px;height:22px;background:#e8f4f5"></div>
<div class="a" style="left:1183px;top:527px;width:72px;height:22px;background:#eef2fa"></div>
<div class="a" style="left:8px;top:548px;width:1247px;height:1px;background:#cadcf2"></div>
<div class="a cell l" style="left:32px;top:527px;width:132px;letter-spacing:0.3px;">15.515.1101</div>
<div class="a cell l" style="left:165px;top:527px;width:272px;letter-spacing:0.368px;">Ahşaptan iç camekan yapılması ve yerine konulması</div>
<div class="a cell c" style="left:440px;top:527px;width:74px;">M2</div>
<div class="a cell r" style="left:515px;top:527px;width:138px;letter-spacing:0.3px;">21,000</div>
<div class="a cell r" style="left:654px;top:527px;width:106px;letter-spacing:0.3px;">21,000</div>
<div class="a cell r" style="left:761px;top:527px;width:91px;letter-spacing:0.2px;">156,76 TL</div>
<div class="a cell r" style="left:853px;top:527px;width:93px;letter-spacing:0.2px;">3.291,96 TL</div>
<div class="a cell r" style="left:947px;top:527px;width:70px;letter-spacing:0.3px;">0,631642</div>
<div class="a cell r" style="left:1018px;top:527px;width:91px;letter-spacing:0.3px;">0,631642</div>
<div class="a cell r" style="left:1110px;top:527px;width:73px;letter-spacing:0.3px;">2020</div>
<div class="a cell c" style="left:1184px;top:527px;width:71px;"><span style="display:inline-block;transform:scaleX(0.82);margin-left:-2px">ÇŞB</span></div>
<div class="a" style="left:8px;top:549px;width:1175px;height:22px;background:#fff3d6"></div>
<div class="a" style="left:1183px;top:549px;width:72px;height:22px;background:#eef2fa"></div>
<div class="a" style="left:8px;top:570px;width:1247px;height:1px;background:#cadcf2"></div>
<div class="a cell l" style="left:32px;top:549px;width:132px;letter-spacing:0.3px;">15.520.1001</div>
<div class="a cell l" style="left:165px;top:549px;width:272px;letter-spacing:0.481px;">Tip ahşap gömme dolap yapılması (2.50x1.80)-(1)</div>
<div class="a cell c" style="left:440px;top:549px;width:74px;">M2</div>
<div class="a cell r" style="left:515px;top:549px;width:138px;letter-spacing:0.3px;">21,000</div>
<div class="a cell r" style="left:654px;top:549px;width:106px;letter-spacing:0.3px;">21,000</div>
<div class="a cell r" style="left:761px;top:549px;width:91px;letter-spacing:0.2px;">380,54 TL</div>
<div class="a cell r" style="left:853px;top:549px;width:93px;letter-spacing:0.2px;">7.991,34 TL</div>
<div class="a cell r" style="left:947px;top:549px;width:70px;letter-spacing:0.3px;">1,533332</div>
<div class="a cell r" style="left:1018px;top:549px;width:91px;letter-spacing:0.3px;">1,533332</div>
<div class="a cell r" style="left:1110px;top:549px;width:73px;letter-spacing:0.3px;">2020</div>
<div class="a cell c" style="left:1184px;top:549px;width:71px;"><span style="display:inline-block;transform:scaleX(0.82);margin-left:-2px">ÇŞB</span></div>
<div class="a" style="left:8px;top:571px;width:1175px;height:22px;background:#e8f4f5"></div>
<div class="a" style="left:1183px;top:571px;width:72px;height:22px;background:#eef2fa"></div>
<div class="a" style="left:8px;top:592px;width:1247px;height:1px;background:#cadcf2"></div>
<div class="a cell l" style="left:32px;top:571px;width:132px;letter-spacing:0.3px;">15.520.1002</div>
<div class="a cell l" style="left:165px;top:571px;width:272px;letter-spacing:0.435px;">Tip ahşap mutfak tezgah altı dolabı (1.68x0.85)-(1)</div>
<div class="a cell c" style="left:440px;top:571px;width:74px;">M2</div>
<div class="a cell r" style="left:515px;top:571px;width:138px;letter-spacing:0.3px;">11,000</div>
<div class="a cell r" style="left:654px;top:571px;width:106px;letter-spacing:0.3px;">11,000</div>
<div class="a cell r" style="left:761px;top:571px;width:91px;letter-spacing:0.2px;">709,79 TL</div>
<div class="a cell r" style="left:853px;top:571px;width:93px;letter-spacing:0.2px;">7.807,69 TL</div>
<div class="a cell r" style="left:947px;top:571px;width:70px;letter-spacing:0.3px;">1,498095</div>
<div class="a cell r" style="left:1018px;top:571px;width:91px;letter-spacing:0.3px;">1,498095</div>
<div class="a cell r" style="left:1110px;top:571px;width:73px;letter-spacing:0.3px;">2020</div>
<div class="a cell c" style="left:1184px;top:571px;width:71px;"><span style="display:inline-block;transform:scaleX(0.82);margin-left:-2px">ÇŞB</span></div>
<div class="a" style="left:8px;top:593px;width:1175px;height:22px;background:#fff3d6"></div>
<div class="a" style="left:1183px;top:593px;width:72px;height:22px;background:#eef2fa"></div>
<div class="a" style="left:8px;top:614px;width:1247px;height:1px;background:#cadcf2"></div>
<div class="a cell l" style="left:32px;top:593px;width:132px;letter-spacing:0.3px;">15.520.1003</div>
<div class="a cell l" style="left:165px;top:593px;width:272px;letter-spacing:0.572px;">Tip ahşap mutfak tezgah üstü dolabı (3.04x0.80)-(1)</div>
<div class="a cell c" style="left:440px;top:593px;width:74px;">M2</div>
<div class="a cell r" style="left:515px;top:593px;width:138px;letter-spacing:0.3px;">11,000</div>
<div class="a cell r" style="left:654px;top:593px;width:106px;letter-spacing:0.3px;">11,000</div>
<div class="a cell r" style="left:761px;top:593px;width:91px;letter-spacing:0.2px;">556,21 TL</div>
<div class="a cell r" style="left:853px;top:593px;width:93px;letter-spacing:0.2px;">6.118,31 TL</div>
<div class="a cell r" style="left:947px;top:593px;width:70px;letter-spacing:0.3px;">1,173946</div>
<div class="a cell r" style="left:1018px;top:593px;width:91px;letter-spacing:0.3px;">1,173946</div>
<div class="a cell r" style="left:1110px;top:593px;width:73px;letter-spacing:0.3px;">2020</div>
<div class="a cell c" style="left:1184px;top:593px;width:71px;"><span style="display:inline-block;transform:scaleX(0.82);margin-left:-2px">ÇŞB</span></div>
<div class="a" style="left:31px;top:197px;width:1px;height:418px;background:#cadcf2"></div>
<div class="a" style="left:164px;top:197px;width:1px;height:418px;background:#cadcf2"></div>
<div class="a" style="left:439px;top:197px;width:1px;height:418px;background:#cadcf2"></div>
<div class="a" style="left:514px;top:197px;width:1px;height:418px;background:#cadcf2"></div>
<div class="a" style="left:653px;top:197px;width:1px;height:418px;background:#cadcf2"></div>
<div class="a" style="left:760px;top:197px;width:1px;height:418px;background:#cadcf2"></div>
<div class="a" style="left:852px;top:197px;width:1px;height:418px;background:#cadcf2"></div>
<div class="a" style="left:946px;top:197px;width:1px;height:418px;background:#cadcf2"></div>
<div class="a" style="left:1017px;top:197px;width:1px;height:418px;background:#cadcf2"></div>
<div class="a" style="left:1109px;top:197px;width:1px;height:418px;background:#cadcf2"></div>
<div class="a" style="left:1183px;top:197px;width:1px;height:418px;background:#cadcf2"></div>
<div class="a" style="left:1255px;top:162px;width:17px;height:452px;background:linear-gradient(90deg,#e0ebf8,#ffffff)"></div>
<div class="a" style="left:1255px;top:162px;width:17px;height:17px;border-radius:3px;border:1px solid #3a62b8;background:linear-gradient(#a8d4f8,#5a8ee0 60%,#3462c0)"><svg width="15" height="15" style="position:absolute;left:0;top:0"><path d="M3.5 9.5L7.5 5.5 11.5 9.5" fill="none" stroke="#fff" stroke-width="2"/></svg></div>
<div class="a" style="left:1255px;top:597px;width:17px;height:17px;border-radius:3px;border:1px solid #3a62b8;background:linear-gradient(#a8d4f8,#5a8ee0 60%,#3462c0)"><svg width="15" height="15" style="position:absolute;left:0;top:0"><path d="M3.5 5.5L7.5 9.5 11.5 5.5" fill="none" stroke="#fff" stroke-width="2"/></svg></div>
<div class="a" style="left:1255px;top:419px;width:17px;height:109px;border-radius:3px;border:1px solid #4868b4;background:linear-gradient(90deg,rgba(255,255,255,0.35),rgba(255,255,255,0) 60%),linear-gradient(#a4cbf4,#78a6e6 40%,#5c88d6)"><svg width="15" height="107" style="position:absolute;left:0;top:0"><path d="M5 52.5h5M5 54.5h5M5 56.5h5" stroke="#dce8fa" stroke-width="1"/><path d="M5 53.5h5M5 55.5h5M5 57.5h5" stroke="#5a80c8" stroke-width="1"/></svg></div>
<div class="t" style="left:14px;top:622px;font-weight:bold;-webkit-text-stroke:0;color:#0c0c1a;letter-spacing:-0.2px">Gruptaki Poz Adedi :</div>
<div class="t" style="left:131px;top:622px;color:#10102a">68</div>
<div class="t" style="left:627px;top:624px;font-weight:bold;-webkit-text-stroke:0;color:#0c0c1a;letter-spacing:-0.4px">Toplam Pursantaj :</div>
<div class="t" style="left:885px;top:624px;color:#7a1c2c">100,00</div>
<div class="t" style="left:939px;top:624px;font-weight:bold;-webkit-text-stroke:0;color:#0c0c1a;letter-spacing:-0.4px">Grup Toplamı :</div>
<div class="t" style="left:1198px;top:624px;color:#7a1c2c;letter-spacing:-0.6px">521.174,65 TL</div>
<div class="a" style="left:7px;top:644px;width:1266px;height:43px;border:1px solid #8eb1e1"></div>
<div class="t" style="left:16px;top:659px;color:#10102a;letter-spacing:0px">El ile Miktar :</div>
<div class="a inp" style="left:87px;width:88px">21,000</div>
<div class="t" style="left:186px;top:659px;color:#10102a;letter-spacing:0px">Metraj :</div>
<div class="a inp" style="left:230px;width:88px">0,000</div>
<div class="t" style="left:338px;top:659px;color:#10102a;letter-spacing:0px">Profil:</div>
<div class="a inp" style="left:373px;width:88px">0,000</div>
<div class="t" style="left:474px;top:659px;color:#10102a;letter-spacing:0px">Demir :</div>
<div class="a inp" style="left:516px;width:87px">0,000</div>
<div class="t" style="left:615px;top:659px;color:#10102a;letter-spacing:-0.2px">Tesisat :</div>
<div class="a inp" style="left:658px;width:88px">0,000</div>
<div class="t" style="left:752px;top:659px;color:#10102a;letter-spacing:0px">Çelik Hasır :</div>
<div class="a inp" style="left:818px;width:88px">0,000</div>
<div class="a" style="left:0;top:694px;width:1280px;height:1px;background:#8cb2e2"></div>
<div class="a" style="left:0;top:695px;width:1280px;height:1px;background:#fff"></div>
<div class="a sb" style="left:1px;width:169px;background:linear-gradient(#98bcea,#b4d2f2)"></div>
<div class="a sb" style="left:171px;width:602px"></div>
<div class="a sb" style="left:774px;width:300px"></div>
<div class="a sb" style="left:1075px;width:205px"></div>
</body></html>
